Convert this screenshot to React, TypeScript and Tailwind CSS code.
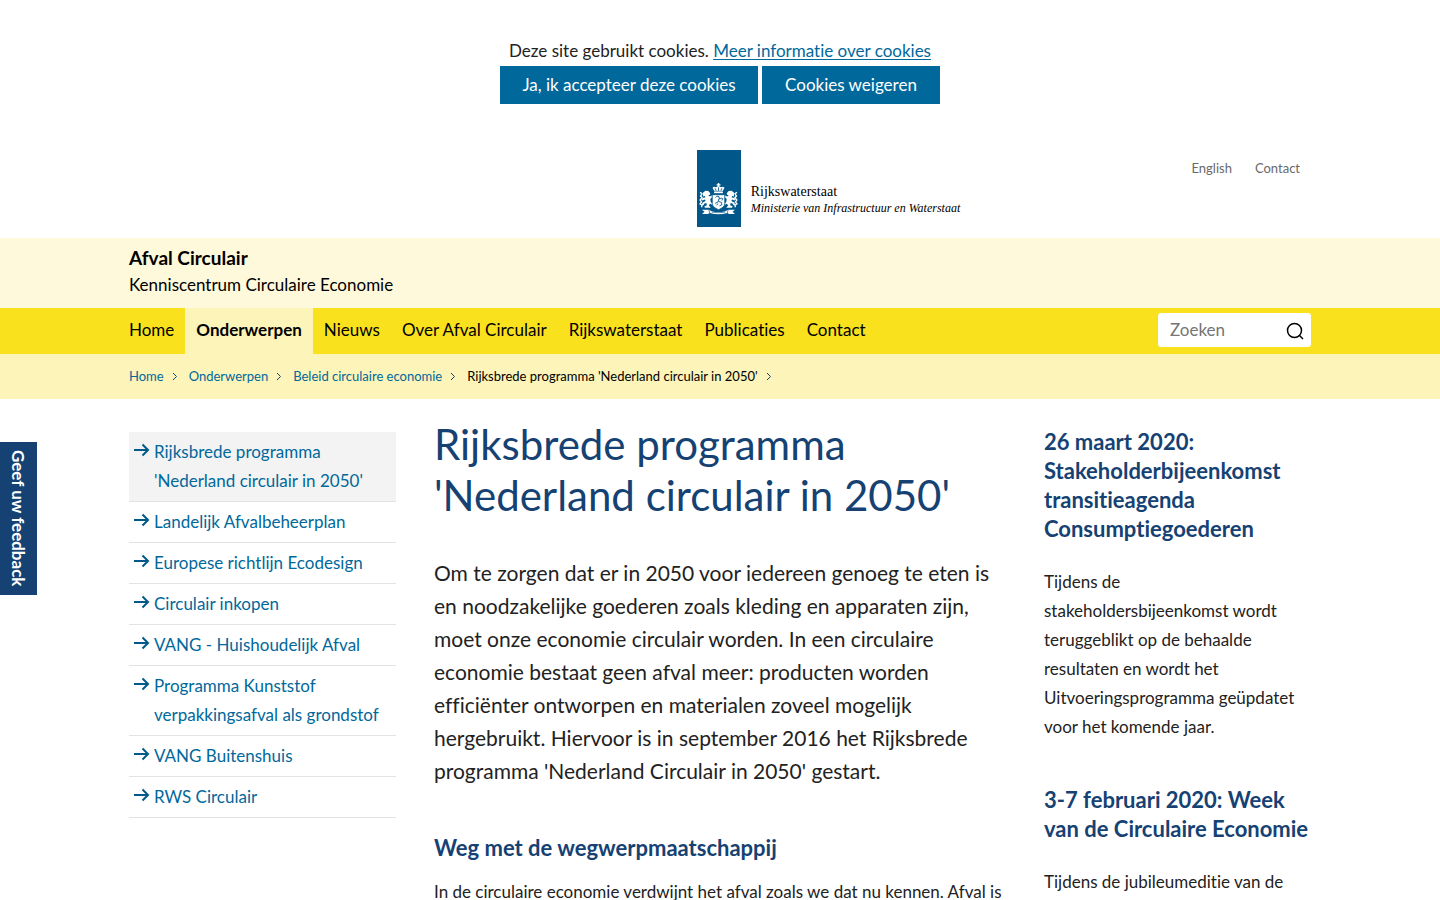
import React from "react";

const navItems = ["Home", "Onderwerpen", "Nieuws", "Over Afval Circulair", "Rijkswaterstaat", "Publicaties", "Contact"];

const crumbs = ["Home", "Onderwerpen", "Beleid circulaire economie"];

const sideItems = [
  "Rijksbrede programma 'Nederland circulair in 2050'",
  "Landelijk Afvalbeheerplan",
  "Europese richtlijn Ecodesign",
  "Circulair inkopen",
  "VANG - Huishoudelijk Afval",
  "Programma Kunststof verpakkingsafval als grondstof",
  "VANG Buitenshuis",
  "RWS Circulair",
];

function Container({ children, className = "" }: { children: React.ReactNode; className?: string }) {
  return <div className={`mx-auto w-full max-w-[1182px] ${className}`}>{children}</div>;
}

function Chevron() {
  return (
    <svg aria-hidden="true" width="6" height="9" viewBox="0 0 6 9" fill="none" stroke="#154273" strokeWidth="1">
      <path d="M1 1l3.5 3.5L1 8" />
    </svg>
  );
}

function Arrow() {
  return (
    <svg aria-hidden="true" width="16" height="14" viewBox="0 0 16 14" fill="none" stroke="#01598a" strokeWidth="2" className="mt-1.5 shrink-0">
      <path d="M0 7h14M8.5 1.5L14 7l-5.500 5.500" />
    </svg>
  );
}

function Lion() {
  return (
    <g>
      <path d="M4 10l2.500-2 3 .3 2 2.200-.3 1.500-1.700.5 1.500 1.500 2.500-1.300.5 1.800-2.500 2 .5 3 2 2-.5 1-2-1-1.500 1.500 2 2.500H6l-.5-1.500 2.500-1-.5-2.500-2 .5-1 2-1.800-.3 1-2.700 3-1.500-.7-1.500-2.500 1-1.300-1 1.800-1.700 2.500-.3-.5-1.500-2 .5z" />
      <path d="M1 9.500l2 1.500-1.500 2.500 1.500 1.500-2 2.500 1.500 2-1.500 2 2 1.500-.5 2" fill="none" stroke="#fff" strokeWidth="1.400" />
    </g>
  );
}

function CoatOfArms() {
  return (
    <svg aria-hidden="true" width="39" height="33" viewBox="0 0 40 34" fill="#fff">
      <path d="M19.200 0h1.600v1.200h1.200v1.300h-1.200v1.300h-1.600V2.500H18V1.200h1.200z" />
      <path d="M15.500 8L13.800 5l1.500-1.200 2 .6L20 3l2.700 1.400 2-.6L26.200 5l-1.700 3z" />
      <path d="M15.500 8.700h9v1.800h-9z" />
      <path d="M16.500 5.500l1 2M20 4.500V8M23.500 5.500l-1 2" stroke="#01568a" strokeWidth=".9" />
      <Lion />
      <g transform="translate(40 0) scale(-1 1)">
        <Lion />
      </g>
      <path d="M13.500 12h13v9c0 3-3 5-6.500 6.500-3.500-1.500-6.500-3.500-6.500-6.500z" stroke="#01568a" strokeWidth=".9" />
      <path d="M17 15l1.500-1.500 2 .5.5 2.500 2.500-1M20.500 16l-1 3.500-3 1.500M20 19l3 1 .5 2.500-2.500 1M18 23l1.500-2M23.500 18l1-2.500" fill="none" stroke="#01568a" strokeWidth=".9" />
      <path d="M3 27.500h7l3 1.500q7 2 14 0l3-1.500h7l-2.500 2L37 32h-6l-2-1q-9 2.500-18 0l-2 1H3l2.500-2.500z" />
      <path d="M10 27.500l1 3.500M30 27.500L29 31M13 30q7 1.300 14 0" fill="none" stroke="#01568a" strokeWidth=".7" />
    </svg>
  );
}

export default function App() {
  return (
    <div className="min-h-screen overflow-x-hidden bg-white font-['Lato',sans-serif] text-[17px] leading-[29px] text-[#222] [font-variant-ligatures:none]">
      <section aria-label="Cookies" className="flex flex-col items-center pt-9 pb-[46px]">
        <p className="leading-[30px]">
          Deze site gebruikt cookies.{" "}
          <a href="#cookies" className="text-[#01689b] underline underline-offset-2">Meer informatie over cookies</a>
        </p>
        <div className="flex gap-1 text-white">
          <button type="button" className="h-[38px] w-[258px] bg-[#01689b] pb-0.5">Ja, ik accepteer deze cookies</button>
          <button type="button" className="h-[38px] w-[178px] bg-[#01689b] pb-0.5">Cookies weigeren</button>
        </div>
      </section>

      <header>
        <Container className="grid grid-cols-[1fr_auto_1fr] pb-[11px]">
          <div />
          <a href="#home" className="col-start-2 ml-[217px] flex items-start gap-[10px] font-['Liberation_Serif',serif] text-black">
            <span className="flex h-[77px] w-11 items-end justify-center bg-[#01568a] pb-[11px]"><CoatOfArms /></span>
            <span className="whitespace-nowrap pt-[34px] leading-4">
              <span className="block text-[14px]">Rijkswaterstaat</span>
              <em className="block text-[12px]">Ministerie van Infrastructuur en Waterstaat</em>
            </span>
          </a>
          <nav aria-label="Service" className="flex justify-end gap-[23px] pt-[7px] pr-[11px] text-[13px] leading-[22px] text-[#696969]">
            <a href="#english">English</a>
            <a href="#contact">Contact</a>
          </nav>
        </Container>

        <div className="bg-[#fef9da] text-black">
          <Container className="h-[70px] pt-[7px]">
            <p className="text-[19px] leading-[26px] font-bold">Afval Circulair</p>
            <p className="leading-[27px]">Kenniscentrum Circulaire Economie</p>
          </Container>
        </div>

        <div className="bg-[#f9e11e] text-black">
          <Container className="flex h-[46px] items-center justify-between">
            <nav aria-label="Hoofdmenu" className="-ml-[11px] flex">
              {navItems.map((item) => (
                <a
                  key={item}
                  href="#menu"
                  className={item === "Onderwerpen" ? "h-[46px] bg-[#fcf4b8] px-[11px] leading-11 font-bold" : "h-[46px] px-[11px] leading-11"}
                >
                  {item}
                </a>
              ))}
            </nav>
            <form role="search" className="-mt-0.5 flex h-[34px] w-[153px] items-center rounded-[3px] bg-white">
              <input aria-label="Zoeken" placeholder="Zoeken" className="min-w-0 flex-1 pb-0.5 pl-3 outline-none placeholder:text-[#757575]" />
              <button type="button" aria-label="Zoek" className="flex w-8 justify-center pt-0.5">
                <svg aria-hidden="true" width="18" height="18" viewBox="0 0 18 18" fill="none" stroke="#000" strokeWidth="1.500">
                  <circle cx="8.500" cy="8.500" r="7" />
                  <path d="M13 13l4 4" />
                </svg>
              </button>
            </form>
          </Container>
        </div>

        <div className="bg-[#fcf4b8]">
          <Container>
            <nav aria-label="Kruimelpad" className="flex h-[45px] items-center text-[13px]">
              {crumbs.map((c) => (
                <span key={c} className="flex items-center">
                  <a href="#crumb" className="text-[#01689b]">{c}</a>
                  <span className="mr-[11px] ml-2"><Chevron /></span>
                </span>
              ))}
              <span className="flex items-center gap-2 text-black">Rijksbrede programma 'Nederland circulair in 2050' <Chevron /></span>
            </nav>
          </Container>
        </div>
      </header>

      <Container className="grid grid-cols-[267px_1fr_267px] gap-[38px]">
        <nav aria-label="Submenu" className="pt-[33px]">
          <ul>
            {sideItems.map((item, i) => (
              <li key={item} className={i === 0 ? "border-b border-[#e3e3e3] bg-[#f3f3f3]" : "border-b border-[#e3e3e3]"}>
                <a href="#sub" className="flex gap-1 pt-[5px] pr-2 pb-1.5 pl-[5px] text-[#01689b]">
                  <Arrow />
                  <span>{item}</span>
                </a>
              </li>
            ))}
          </ul>
        </nav>

        <main className="pt-5">
          <h1 className="text-[42px] leading-[51px] text-[#154273]">Rijksbrede programma 'Nederland circulair in 2050'</h1>
          <p className="mt-[35px] text-[21px] leading-[33px]">
            Om te zorgen dat er in 2050 voor iedereen genoeg te eten is en noodzakelijke goederen zoals kleding en apparaten zijn, moet onze economie circulair worden. In een circulaire economie bestaat geen afval meer: producten worden efficiënter ontworpen en materialen zoveel mogelijk hergebruikt. Hiervoor is in september 2016 het Rijksbrede programma 'Nederland Circulair in 2050' gestart.
          </p>
          <h2 className="mt-[46px] text-[22px] leading-[29px] font-bold text-[#154273]">Weg met de wegwerpmaatschappij</h2>
          <p className="mt-[15px]">In de circulaire economie verdwijnt het afval zoals we dat nu kennen. Afval is</p>
        </main>

        <aside className="pt-7">
          <h2 className="text-[22px] leading-[29px] font-bold text-[#154273]">26 maart 2020: Stakeholderbijeenkomst transitieagenda Consumptiegoederen</h2>
          <p className="mt-6 pr-2">Tijdens de stakeholdersbijeenkomst wordt teruggeblikt op de behaalde resultaten en wordt het Uitvoeringsprogramma geüpdatet voor het komende jaar.</p>
          <h2 className="mt-11 text-[22px] leading-[29px] font-bold text-[#154273]">3-7 februari 2020: Week van de Circulaire Economie</h2>
          <p className="mt-6 pr-2">Tijdens de jubileumeditie van de</p>
        </aside>
      </Container>

      <button type="button" className="fixed top-[442px] left-0 h-[153px] w-[37px] bg-[#154273] text-[17px] font-bold text-white [writing-mode:vertical-rl]">
        Geef uw feedback
      </button>
    </div>
  );
}
